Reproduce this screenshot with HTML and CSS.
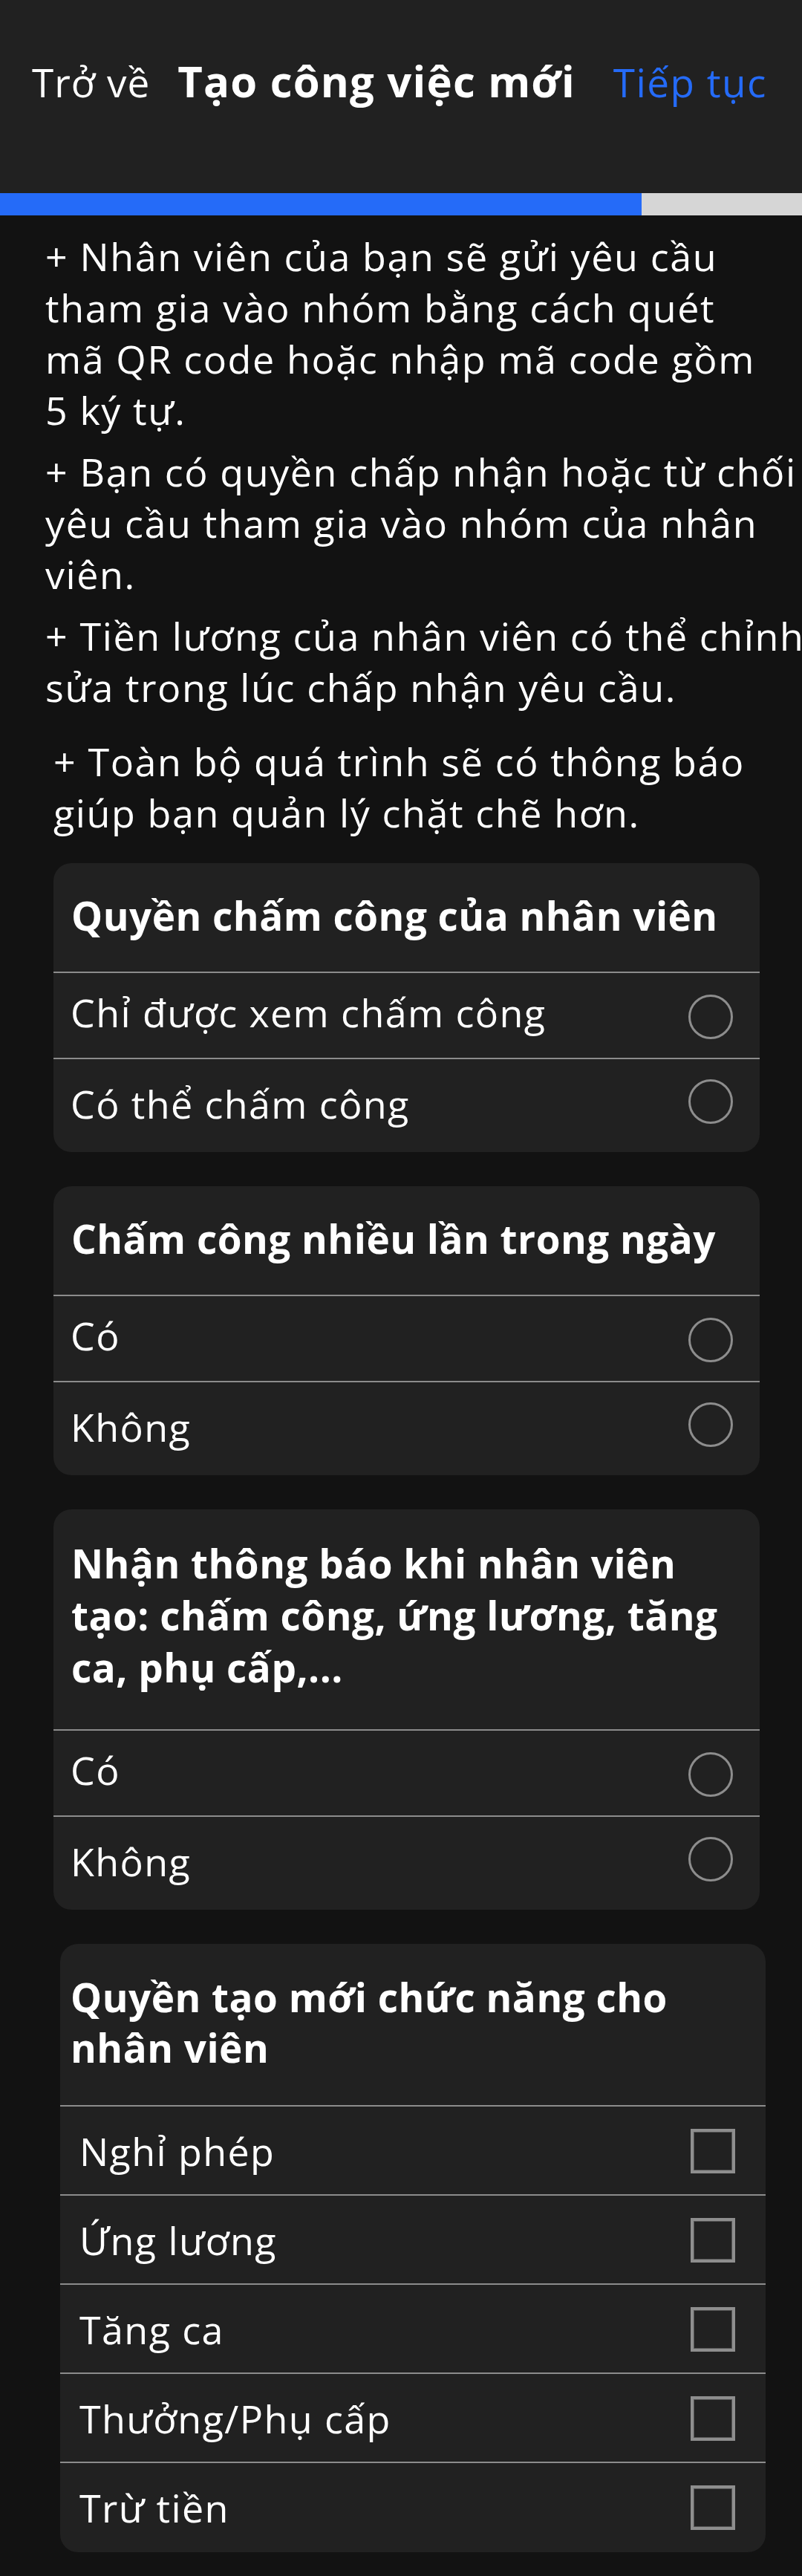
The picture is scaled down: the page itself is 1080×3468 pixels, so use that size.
FILE: index.html
```html
<!DOCTYPE html>
<html lang="vi">
<head>
<meta charset="utf-8">
<title>Tạo công việc mới</title>
<link rel="stylesheet" href="styles.css">
</head>
<body>
<header class="topbar">
  <span class="back">Trở về</span>
  <span class="title">Tạo công việc mới</span>
  <span class="next">Tiếp tục</span>
</header>
<div class="progress"><div class="progress-fill" style="width:80%"></div></div>

<section class="intro">
  <p>+ Nhân viên của bạn sẽ gửi yêu cầu<br>tham gia vào nhóm bằng cách quét<br>mã QR code hoặc nhập mã code gồm<br>5 ký tự.</p>
  <p>+ Bạn có quyền chấp nhận hoặc từ chối<br>yêu cầu tham gia vào nhóm của nhân<br>viên.</p>
  <p>+ Tiền lương của nhân viên có thể chỉnh<br>sửa trong lúc chấp nhận yêu cầu.</p>
  <p class="indent">+ Toàn bộ quá trình sẽ có thông báo<br>giúp bạn quản lý chặt chẽ hơn.</p>
</section>

<main class="cards">
  <div class="card">
    <div class="card-title">Quyền chấm công của nhân viên</div>
    <div class="row"><span class="label">Chỉ được xem chấm công</span><span class="radio"></span></div>
    <div class="row"><span class="label">Có thể chấm công</span><span class="radio"></span></div>
  </div>

  <div class="card">
    <div class="card-title">Chấm công nhiều lần trong ngày</div>
    <div class="row"><span class="label">Có</span><span class="radio"></span></div>
    <div class="row"><span class="label">Không</span><span class="radio"></span></div>
  </div>

  <div class="card card-long">
    <div class="card-title">Nhận thông báo khi nhân viên<br>tạo: chấm công, ứng lương, tăng<br>ca, phụ cấp,...</div>
    <div class="row"><span class="label">Có</span><span class="radio"></span></div>
    <div class="row"><span class="label">Không</span><span class="radio"></span></div>
  </div>

  <div class="card card-wide">
    <div class="card-title">Quyền tạo mới chức năng cho<br>nhân viên</div>
    <div class="row"><span class="label">Nghỉ phép</span><span class="check"></span></div>
    <div class="row"><span class="label">Ứng lương</span><span class="check"></span></div>
    <div class="row"><span class="label">Tăng ca</span><span class="check"></span></div>
    <div class="row"><span class="label">Thưởng/Phụ cấp</span><span class="check"></span></div>
    <div class="row"><span class="label">Trừ tiền</span><span class="check"></span></div>
  </div>
</main>
</body>
</html>
```

FILE: styles.css
```css
* { box-sizing: border-box; }

html, body {
  margin: 0;
  padding: 0;
}

body {
  background: #121212;
  color: #ffffff;
  font-family: "Open Sans", "Noto Sans", sans-serif;
  width: 1080px;
  min-height: 3468px;
}

/* Header */
.topbar {
  height: 260px;
  background: #212121;
  display: flex;
  align-items: baseline;
  padding: 69px 47px 0 43px;
  line-height: 80px;
  white-space: nowrap;
}

.back {
  font-size: 53px;
  font-weight: 400;
  letter-spacing: 1px;
  margin-right: 37px;
}

.title {
  font-size: 58px;
  font-weight: 700;
  letter-spacing: 1.2px;
}

.next {
  margin-left: auto;
  font-size: 53px;
  font-weight: 400;
  letter-spacing: 1.5px;
  color: #256bf8;
}

.progress {
  height: 30px;
  background: #d6d6d6;
}

.progress-fill {
  height: 100%;
  background: #256bf8;
}

/* Intro text */
.intro {
  padding: 20px 0 0 61px;
  font-size: 52px;
  font-weight: 400;
  line-height: 69px;
  letter-spacing: 1.6px;
  white-space: nowrap;
}

.intro p {
  margin: 0 0 14px 0;
}

.intro p.indent {
  margin-top: 31px;
  padding-left: 11px;
  margin-bottom: 0;
}

/* Cards */
.cards {
  display: flex;
  flex-direction: column;
  gap: 46px;
  padding: 34px 0 33px 72px;
}

.card {
  width: 951px;
  background: #212121;
  border-radius: 24px;
  overflow: hidden;
}

.card-title {
  padding: 38px 24px 43px 24px;
  font-size: 53px;
  font-weight: 700;
  line-height: 65px;
  letter-spacing: 0.5px;
  white-space: nowrap;
  border-bottom: 2px solid #8c8c8c;
}

.row {
  display: flex;
  align-items: flex-start;
  justify-content: space-between;
  height: 116px;
  padding: 0 36px 0 23px;
  border-bottom: 2px solid #8c8c8c;
}

.row:last-child {
  border-bottom: none;
  height: 125px;
}

.label {
  font-size: 52px;
  font-weight: 400;
  line-height: 64px;
  letter-spacing: 1.4px;
  margin-top: 21px;
  white-space: nowrap;
}

.row:last-child .label {
  margin-top: 28px;
}

.radio {
  width: 60px;
  height: 60px;
  border: 3px solid #8d8d8d;
  border-radius: 50%;
  margin-top: 29px;
  flex: none;
}

.row:last-child .radio {
  margin-top: 27px;
}

/* Card with a three-line title */
.card-long .card-title {
  line-height: 70px;
  padding-bottom: 48px;
}

/* Wide checkbox card */
.card-wide {
  width: 950px;
  margin-left: 9px;
}

.card-wide .card-title {
  padding: 38px 14px 43px 14px;
  line-height: 68px;
}

.card-wide .row {
  height: 120px;
  padding: 0 41px 0 26px;
}

.card-wide .row:last-child {
  height: 120px;
}

.card-wide .label,
.card-wide .row:last-child .label {
  margin-top: 28px;
}

.check {
  width: 60px;
  height: 60px;
  border: 4px solid #8e8e8e;
  box-shadow: inset 0 0 0 1px #555555;
  margin-top: 30px;
  flex: none;
}
```
